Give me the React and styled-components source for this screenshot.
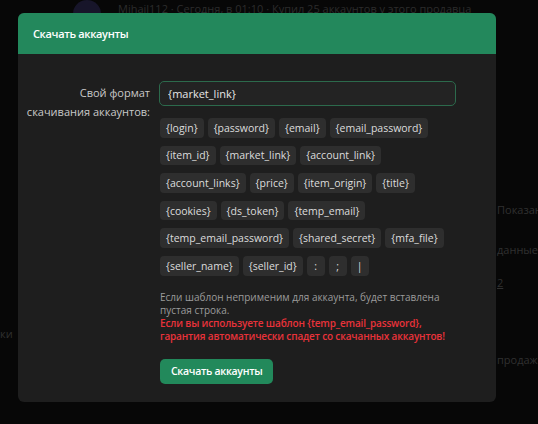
import React from 'react'
import styled, { createGlobalStyle } from 'styled-components'

const tokens = [
  ['{login}', '{password}', '{email}', '{email_password}'],
  ['{item_id}', '{market_link}', '{account_link}'],
  ['{account_links}', '{price}', '{item_origin}', '{title}'],
  ['{cookies}', '{ds_token}', '{temp_email}'],
  ['{temp_email_password}', '{shared_secret}', '{mfa_file}'],
  ['{seller_name}', '{seller_id}', ':', ';', '|'],
]

function App() {
  return (
    <Page>
      <GlobalStyle />
      <Feed>
        <Avatar />
        <FeedText>Mihail112 · Сегодня, в 01:10 · Купил 25 аккаунтов у этого продавца</FeedText>
      </Feed>
      <SideText top={202}>Показано</SideText>
      <SideText top={242}>данные</SideText>
      <SideText top={275} underline>2</SideText>
      <SideText top={352}>продажи</SideText>
      <LeftText>ки</LeftText>

      <Modal>
        <Header>Скачать аккаунты</Header>
        <Body>
          <FormRow>
            <Label>Свой формат скачивания аккаунтов:</Label>
            <Controls>
              <Input defaultValue="{market_link}" />
              <Chips>
                {tokens.map((row, i) => (
                  <ChipRow key={i}>
                    {row.map(t => (
                      <Chip key={t} narrow={t.length === 1}>{t}</Chip>
                    ))}
                  </ChipRow>
                ))}
              </Chips>
              <Hint>
                <p>Если шаблон неприменим для аккаунта, будет вставлена пустая строка.</p>
                <Warning>
                  Если вы используете шаблон {'{temp_email_password}'}, гарантия автоматически спадет со скачанных аккаунтов!
                </Warning>
              </Hint>
              <Button>Скачать аккаунты</Button>
            </Controls>
          </FormRow>
        </Body>
      </Modal>
    </Page>
  )
}

export default App

const GlobalStyle = createGlobalStyle`
  html, body {
    margin: 0;
    padding: 0;
    background: #070707;
    font-family: "Open Sans", "Liberation Sans", sans-serif;
  }
`

const Page = styled.div`
  position: relative;
  width: 538px;
  height: 424px;
  overflow: hidden;
  background: #070707;
`

const Feed = styled.div`
  display: flex;
  align-items: center;
  gap: 17px;
  padding: 0 0 0 73px;
  height: 28px;
`

const Avatar = styled.div`
  width: 28px;
  height: 28px;
  border-radius: 50%;
  background: #17152a;
`

const FeedText = styled.div`
  font-size: 11px;
  color: #2c2c2c;
  white-space: nowrap;
  margin-top: -12px;
`

const SideText = styled.div`
  position: absolute;
  left: 497px;
  top: ${p => p.top}px;
  font-size: 11px;
  color: #303030;
  white-space: nowrap;
  text-decoration: ${p => (p.underline ? 'underline' : 'none')};
`

const LeftText = styled.div`
  position: absolute;
  left: 0;
  top: 326px;
  font-size: 11px;
  color: #303030;
`

const Modal = styled.div`
  position: absolute;
  top: 13px;
  left: 18px;
  width: 478px;
  height: 389px;
  border-radius: 6px;
  overflow: hidden;
  background: #1e1e1e;
  display: flex;
  flex-direction: column;
`

const Header = styled.div`
  height: 41px;
  background: #23885c;
  color: #fff;
  font-size: 11px;
  font-weight: 600;
  letter-spacing: -0.35px;
  display: flex;
  align-items: center;
  padding: 0 15px;
`

const Body = styled.div`
  padding: 27px 40px 0 0;
`

const FormRow = styled.div`
  display: flex;
  gap: 10px;
`

const Label = styled.div`
  flex: 0 0 132px;
  text-align: right;
  font-size: 11px;
  line-height: 19px;
  color: #c9c9c9;
  padding-top: 2px;
`

const Controls = styled.div`
  flex: 1;
  min-width: 0;
  display: flex;
  flex-direction: column;
`

const Input = styled.input`
  box-sizing: border-box;
  width: 297px;
  margin-left: -1px;
  height: 25px;
  border: 1.5px solid #2c6a4c;
  border-radius: 5px;
  background: #232323;
  color: #e6e6e6;
  font-family: inherit;
  font-size: 11px;
  padding: 0 8px;
  outline: none;
`

const Chips = styled.div`
  display: flex;
  flex-direction: column;
  gap: 8px;
  margin-top: 12px;
`

const ChipRow = styled.div`
  display: flex;
  gap: 4px;
`

const Chip = styled.span`
  height: 19.6px;
  box-sizing: border-box;
  display: inline-flex;
  align-items: center;
  justify-content: center;
  padding: 0 ${p => (p.narrow ? '0' : '6px')};
  width: ${p => (p.narrow ? '18px' : 'auto')};
  background: #2e2e2e;
  border-radius: 4px;
  color: #dcdcdc;
  font-size: 10.5px;
  white-space: nowrap;
`

const Hint = styled.div`
  margin-top: 15px;
  font-size: 10px;
  line-height: 13px;
  color: #9b9b9b;
  width: 300px;
  p {
    margin: 0;
  }
`

const Warning = styled.p`
  color: #e8323a;
  font-weight: 600;
  letter-spacing: -0.15px;
`

const Button = styled.button`
  align-self: flex-start;
  margin-top: 16px;
  height: 25px;
  padding: 0 11px;
  border: none;
  border-radius: 5px;
  background: #22895b;
  color: #fff;
  font-family: inherit;
  font-size: 10.5px;
  font-weight: 600;
  letter-spacing: -0.3px;
`
